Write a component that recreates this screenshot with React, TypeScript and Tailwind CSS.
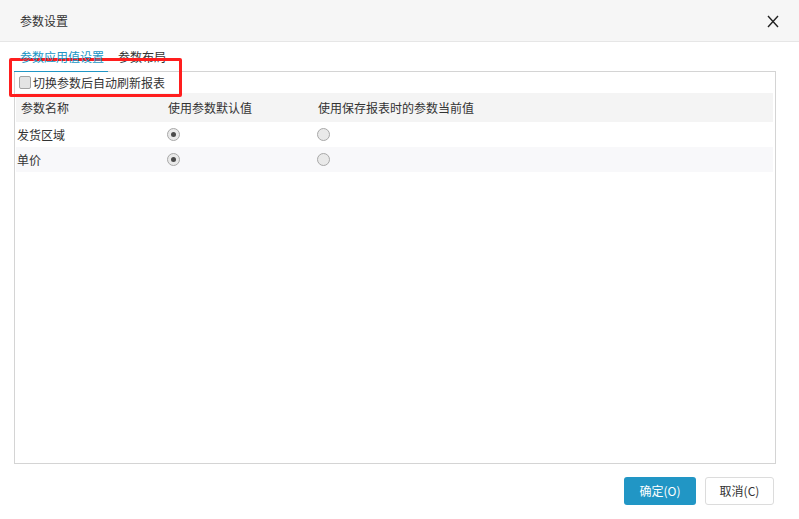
const rows = [
  { name: "发货区域", useDefault: true },
  { name: "单价", useDefault: true },
]

function Radio({ checked }: { checked: boolean }) {
  return (
    <span className="flex h-[13px] w-[13px] items-center justify-center rounded-full border border-[#a8a8a8] bg-[#e9e9e9]">
      {checked && <span className="h-[5px] w-[5px] rounded-full bg-[#4a4a4a]" />}
    </span>
  )
}

export default function App() {
  return (
    <div
      className="relative h-[519px] w-[799px] overflow-hidden bg-white text-[12px] text-[#333]"
      style={{ fontFamily: '"Noto Sans CJK SC", "Liberation Sans", sans-serif' }}
    >
      <div className="flex h-[42px] items-center justify-between border-b border-[#e6e6e6] bg-[#f6f6f6] pl-5 pr-[20px]">
        <span className="text-[12px] text-[#333]">参数设置</span>
        <svg width="12" height="13" viewBox="0 0 12 13" className="mt-[2px]">
          <path d="M1 1 L11 12 M11 1 L1 12" stroke="#222" strokeWidth="1.4" />
        </svg>
      </div>

      <div className="ml-[14px] w-[762px]">
        <div className="flex h-[29px]">
          <div className="relative z-10 h-[30px] w-[94px] border-b border-[#2196c5] pl-[6px] leading-[29px] text-[#2196c5]">
            参数应用值设置
          </div>
          <div className="ml-[4px] pl-[6px] leading-[29px] text-[#333]">参数布局</div>
        </div>

        <div className="h-[393px] border border-[#d4d4d4] pl-px pr-[2px]">
          <div className="flex h-[21px] items-center">
            <span className="ml-[3px] h-[13px] w-[12px] rounded-[2px] border border-[#a3a3a3] bg-[#e4e4e4]" />
            <span className="ml-[2px]">切换参数后自动刷新报表</span>
          </div>
          <div className="flex h-[29px] items-center bg-[#f4f4f4]">
            <div className="w-[152px] pl-[5px]">参数名称</div>
            <div className="w-[150px]">使用参数默认值</div>
            <div>使用保存报表时的参数当前值</div>
          </div>
          {rows.map((r, i) => (
            <div
              key={r.name}
              className={i % 2 === 1 ? "flex h-[25px] items-center bg-[#f8f8fa]" : "flex h-[25px] items-center bg-white"}
            >
              <div className="w-[151px] pl-px">{r.name}</div>
              <div className="w-[150px]">
                <Radio checked={r.useDefault} />
              </div>
              <div>
                <Radio checked={!r.useDefault} />
              </div>
            </div>
          ))}
        </div>
      </div>

      <div className="mt-[13px] flex justify-end gap-[9px] pr-[25px]">
        <button className="h-[28px] w-[72px] rounded-[3px] bg-[#2196c5] text-[12px] text-white">确定(O)</button>
        <button className="h-[28px] w-[69px] rounded-[3px] border border-[#dcdcdc] bg-white text-[12px] text-[#333]">
          取消(C)
        </button>
      </div>

      <div className="absolute left-[9px] top-[58px] h-[39px] w-[173px] rounded-[2px] border-[3px] border-[#ff1e1e]" />
    </div>
  )
}
